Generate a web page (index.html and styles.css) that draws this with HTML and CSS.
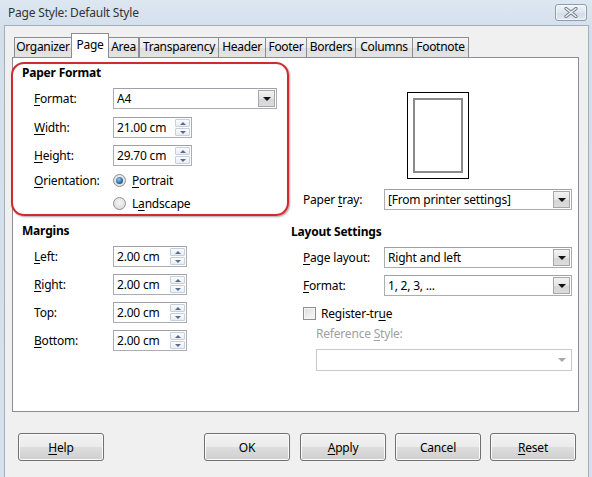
FILE: index.html
```html
<!DOCTYPE html>
<html>
<head>
<meta charset="utf-8">
<link rel="stylesheet" href="styles.css">
</head>
<body>
<div class="window">
  <div class="titlebar">
    <span class="title">Page Style: Default Style</span>
    <span class="close">
      <svg width="16" height="11" viewBox="0 0 16 11"><path d="M3 1.5 L13 9.5 M13 1.5 L3 9.5" stroke="#6f7b8a" stroke-width="3.2" stroke-linecap="round"/><path d="M3 1.5 L13 9.5 M13 1.5 L3 9.5" stroke="#f4f6f8" stroke-width="1.4" stroke-linecap="round"/></svg>
    </span>
  </div>
  <div class="client">
    <div class="tabs">
      <div class="tab t-org">Organizer</div>
      <div class="tab active t-page">Page</div>
      <div class="tab t-area">Area</div>
      <div class="tab sep t-trans">Transparency</div>
      <div class="tab t-head">Header</div>
      <div class="tab t-foot">Footer</div>
      <div class="tab t-bord">Borders</div>
      <div class="tab t-cols">Columns</div>
      <div class="tab t-note">Footnote</div>
    </div>
    <div class="panel">
      <div class="col-left">
        <section class="paper-format">
          <div class="heading">Paper Format</div>
          <div class="row r-format"><label class="lbl"><u>F</u>ormat:</label><div class="select w164"><span class="val">A4</span><span class="dd"><i class="tri"></i></span></div></div>
          <div class="row r-gap8"><label class="lbl"><u>W</u>idth:</label><div class="spin w79"><span class="val">21.00 cm</span><span class="sb"><i class="up"></i><i class="dn"></i></span></div></div>
          <div class="row"><label class="lbl"><u>H</u>eight:</label><div class="spin w79"><span class="val">29.70 cm</span><span class="sb"><i class="up"></i><i class="dn"></i></span></div></div>
          <div class="row radio-row r-orient"><label class="lbl"><u>O</u>rientation:</label><span class="radio checked"></span><span class="rtext"><u>P</u>ortrait</span></div>
          <div class="row radio-row"><span class="lbl"></span><span class="radio"></span><span class="rtext">L<u>a</u>ndscape</span></div>
        </section>
        <section class="margins">
          <div class="heading">Margins</div>
          <div class="row"><label class="lbl"><u>L</u>eft:</label><div class="spin w74"><span class="val">2.00 cm</span><span class="sb"><i class="up"></i><i class="dn"></i></span></div></div>
          <div class="row"><label class="lbl"><u>R</u>ight:</label><div class="spin w74"><span class="val">2.00 cm</span><span class="sb"><i class="up"></i><i class="dn"></i></span></div></div>
          <div class="row"><label class="lbl">Top:</label><div class="spin w74"><span class="val">2.00 cm</span><span class="sb"><i class="up"></i><i class="dn"></i></span></div></div>
          <div class="row"><label class="lbl"><u>B</u>ottom:</label><div class="spin w74"><span class="val">2.00 cm</span><span class="sb"><i class="up"></i><i class="dn"></i></span></div></div>
        </section>
      </div>
      <div class="col-right">
        <div class="preview"><div class="preview-inner"></div></div>
        <div class="row r-tray"><label class="lbl2">Paper <u>t</u>ray:</label><div class="select w188"><span class="val">[From printer settings]</span><span class="dd"><i class="tri"></i></span></div></div>
        <div class="heading h-layout">Layout Settings</div>
        <div class="row r-sub"><label class="lbl2"><u>P</u>age layout:</label><div class="select w188"><span class="val">Right and left</span><span class="dd"><i class="tri"></i></span></div></div>
        <div class="row r-sub"><label class="lbl2"><u>F</u>ormat:</label><div class="select w188"><span class="val">1, 2, 3, ...</span><span class="dd"><i class="tri"></i></span></div></div>
        <div class="row check-row"><span class="checkbox"></span><span class="ctext">Register-tr<u>u</u>e</span></div>
        <div class="ref-label">Reference <u>S</u>tyle:</div>
        <div class="select disabled w256"><span class="val"></span><span class="dd"><i class="tri"></i></span></div>
      </div>
    </div>
    <div class="buttons">
      <button class="btn"><u>H</u>elp</button>
      <span class="spacer"></span>
      <button class="btn">OK</button>
      <button class="btn b-apply"><u>A</u>pply</button>
      <button class="btn b-next">Cancel</button>
      <button class="btn b-next"><u>R</u>eset</button>
    </div>
  </div>
</div>
</body>
</html>
```

FILE: styles.css
```css
* { box-sizing: border-box; }
html, body { margin: 0; padding: 0; }
body {
  width: 592px;
  height: 477px;
  overflow: hidden;
  font-family: "Noto Sans", "Open Sans", sans-serif;
  font-size: 12px;
  letter-spacing: -0.2px;
  color: #000;
  background: #d8e3ef;
}
u { text-decoration: underline; text-underline-offset: 2px; text-decoration-thickness: 1px; }

.window {
  width: 592px;
  height: 477px;
  display: flex;
  flex-direction: column;
  background: linear-gradient(#dde7f2, #d3dfeb 30px, #d6e1ed);
}
.titlebar {
  height: 25px;
  display: flex;
  align-items: flex-start;
  justify-content: space-between;
  padding: 0 4px 0 8px;
}
.title {
  margin-top: 4px;
  line-height: 17px;
  font-size: 12px;
  color: #333;
}
.close {
  margin-top: 4px;
  margin-right: 1px;
  width: 32px;
  height: 17px;
  border: 1px solid #8e9bac;
  border-radius: 3px;
  background: linear-gradient(#f1f4f8, #dde5ee 50%, #d3dce7 51%, #dfe6ee);
  box-shadow: inset 0 0 0 1px rgba(255,255,255,.6);
  display: flex;
  align-items: center;
  justify-content: center;
}
.client {
  flex: 1;
  margin: 0 3px 0 4px;
  background: #f0f0f0;
  border: 1px solid #a3aebb;
  border-bottom: none;
  display: flex;
  flex-direction: column;
}

/* tabs */
.tabs {
  display: flex;
  align-items: flex-end;
  margin: 6px 0 0 9px;
  height: 25px;
}
.tab {
  height: 20px;
  margin-left: -1px;
  border: 1px solid #8a8d94;
  border-bottom: none;
  background: linear-gradient(#f3f3f3, #ebebeb 50%, #dedede 51%, #e4e4e4);
  line-height: 18px;
  text-align: center;
  white-space: nowrap;
  letter-spacing: -0.3px;
}
.tab:first-child { margin-left: 0; }
.tab.sep { margin-left: 0; }
.tab.active {
  height: 25px;
  margin-bottom: -1px;
  background: #fff;
  position: relative;
  z-index: 1;
  line-height: 22px;
}
.t-org { width: 58px; }
.t-page { width: 38px; }
.t-area { width: 31px; }
.t-trans { width: 80px; }
.t-head { width: 48px; }
.t-foot { width: 42px; }
.t-bord { width: 50px; }
.t-cols { width: 58px; }
.t-note { width: 57px; }

/* panel */
.panel {
  margin-left: 7px;
  width: 567px;
  height: 355px;
  border: 1px solid #8a8d94;
  background: #fff;
  display: grid;
  grid-template-columns: 278px 287px;
}
.col-left { margin-left: -2px; padding-top: 4px; }
.col-right { margin-left: 0; }

.heading { font-weight: bold; height: 16px; line-height: 16px; }

.paper-format {
  width: 278px;
  height: 154px;
  border: 2px solid #cf2a30;
  border-radius: 13px;
  box-shadow: 1px 1px 2px rgba(0,0,0,.35), inset 0 0 1px rgba(160,0,0,.3);
  padding: 1px 0 0 9px;
}
.paper-format .row { margin-left: 12px; }
.margins { padding: 7px 0 0 11px; }
.margins .row { margin-left: 12px; margin-top: 7px; }

.row {
  display: flex;
  align-items: center;
  height: 21px;
  margin-top: 7px;
}
.r-gap8 { margin-top: 8px; }
.lbl { width: 79px; flex: none; }
.lbl2 { width: 81px; flex: none; }

.radio-row { height: 16px; }
.r-orient { margin-top: 6px; }
.radio {
  width: 13px;
  height: 13px;
  border-radius: 50%;
  border: 1px solid #8e8f8f;
  background: radial-gradient(circle at 50% 40%, #f4f4f4, #d6d6d6);
  flex: none;
  position: relative;
}
.radio.checked::after {
  content: "";
  position: absolute;
  left: 2px; top: 2px;
  width: 7px; height: 7px;
  border-radius: 50%;
  background: radial-gradient(circle at 40% 35%, #8ccbf1, #1b5a96 70%);
}
.rtext { margin-left: 6px; }

.select, .spin {
  height: 21px;
  border: 1px solid #abadb3;
  border-top-color: #9da0a6;
  background: #fff;
  display: flex;
  align-items: center;
  position: relative;
  flex: none;
}
.w164 { width: 164px; }
.w79 { width: 79px; }
.w74 { width: 74px; }
.w188 { width: 188px; }
.w256 { width: 256px; height: 22px; }
.val { padding-left: 3px; flex: 1; white-space: nowrap; }
.dd {
  width: 17px;
  height: 17px;
  margin-right: 1px;
  border: 1px solid #a7a7a7;
  background: linear-gradient(#f2f2f2, #e5e5e5 50%, #d5d5d5 51%, #dcdcdc);
  display: flex;
  align-items: center;
  justify-content: center;
  flex: none;
}
.tri {
  width: 0; height: 0;
  border-left: 4px solid transparent;
  border-right: 4px solid transparent;
  border-top: 4px solid #111;
}
.select.disabled { border-color: #c9c9c9; }
.select.disabled .dd { border: none; background: none; }
.select.disabled .tri { border-top-color: #a8a8a8; }

.sb {
  width: 15px;
  height: 17px;
  margin-right: 1px;
  display: flex;
  flex-direction: column;
  gap: 1px;
  flex: none;
}
.sb i {
  flex: 1;
  border: 1px solid #c6cfdc;
  border-radius: 1px;
  background: linear-gradient(#fbfbfc, #e9edf2);
  display: flex;
  align-items: center;
  justify-content: center;
}
.sb i::after {
  content: "";
  width: 0; height: 0;
  border-left: 3px solid transparent;
  border-right: 3px solid transparent;
}
.sb .up::after { border-bottom: 3px solid #5a6c8c; }
.sb .dn::after { border-top: 3px solid #5a6c8c; }

/* right column */
.preview {
  width: 62px;
  height: 87px;
  margin: 34px 0 0 116px;
  border: 1px solid #000;
  padding: 5px;
}
.preview-inner {
  width: 50px;
  height: 75px;
  border: 2px solid #8a8a8a;
}
.r-tray { margin-top: 10px; padding-left: 12px; }
.h-layout { margin-top: 14px; }
.r-sub { padding-left: 12px; }
.check-row { height: 16px; margin-top: 9px; padding-left: 12px; }
.checkbox {
  width: 13px; height: 13px;
  border: 1px solid #8e8f8f;
  background: linear-gradient(135deg, #dcdcdc, #fafafa);
  box-shadow: inset 0 0 0 1px #f4f4f4;
  flex: none;
}
.ctext { margin-left: 5px; }
.ref-label {
  margin: 5px 0 0 25px;
  height: 16px;
  line-height: 16px;
  color: #a0a0a0;
}
.col-right > .select.disabled { margin: 7px 0 0 25px; }

/* buttons */
.buttons {
  display: flex;
  margin: 21px 0 0 13px;
  width: 558px;
}
.spacer { flex: 1; }
.btn {
  width: 86px;
  height: 28px;
  padding: 0;
  font: inherit;
  letter-spacing: inherit;
  color: #000;
  border: 1px solid #707070;
  border-radius: 3px;
  background: linear-gradient(#f2f2f2, #ebebeb 50%, #dddddd 51%, #cfcfcf);
  box-shadow: inset 0 0 0 1px #fbfbfb;
}
.b-apply { margin-left: 10px; }
.b-next { margin-left: 9px; }
```
